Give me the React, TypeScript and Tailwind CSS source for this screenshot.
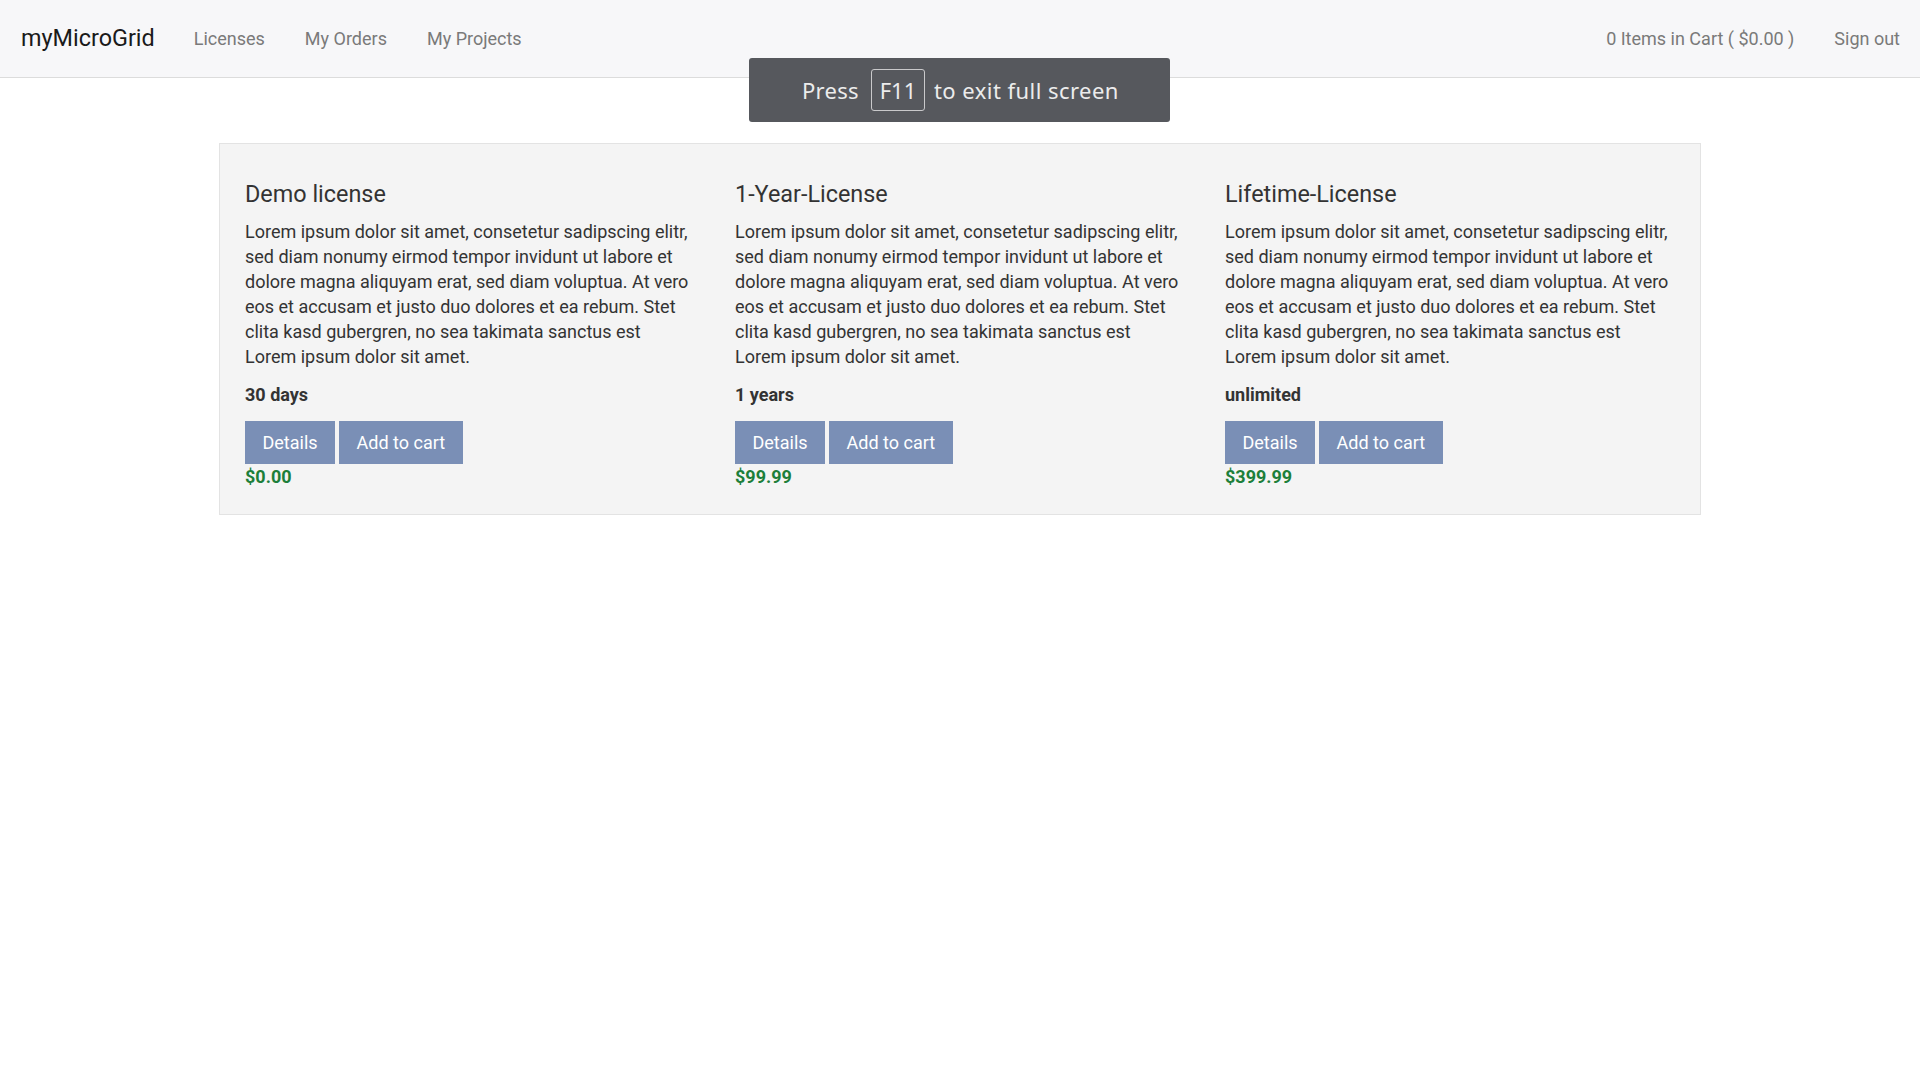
import React from "react";

const lorem =
  "Lorem ipsum dolor sit amet, consetetur sadipscing elitr, sed diam nonumy eirmod tempor invidunt ut labore et dolore magna aliquyam erat, sed diam voluptua. At vero eos et accusam et justo duo dolores et ea rebum. Stet clita kasd gubergren, no sea takimata sanctus est Lorem ipsum dolor sit amet.";

const licenses = [
  { title: "Demo license", duration: "30 days", price: "$0.00" },
  { title: "1-Year-License", duration: "1 years", price: "$99.99" },
  { title: "Lifetime-License", duration: "unlimited", price: "$399.99" },
];

export default function App() {
  return (
    <div className="relative min-h-[1080px] bg-white font-['Roboto',sans-serif] text-[18px] leading-[25px] text-[#333]">
      <nav className="flex h-[78px] items-center justify-between border-b border-[#dcdcdc] bg-[#f7f7f9]">
        <div className="flex items-center">
          <span className="pl-[21px] pr-[19px] text-[23.4px] text-[#1a1a1a]">myMicroGrid</span>
          <a className="px-[20px] text-[#7a7a7a]">Licenses</a>
          <a className="px-[20px] text-[#7a7a7a]">My Orders</a>
          <a className="px-[20px] text-[#7a7a7a]">My Projects</a>
        </div>
        <div className="flex items-center">
          <a className="px-[20px] text-[#7a7a7a]">0 Items in Cart ( $0.00 )</a>
          <a className="px-[20px] text-[#7a7a7a]">Sign out</a>
        </div>
      </nav>

      <div className="mx-auto mt-[65px] w-[1482px] border border-[#e3e3e3] bg-[#f4f4f4] px-[5px] pt-[38px] pb-[25px]">
        <div className="grid grid-cols-3">
          {licenses.map((l) => (
            <div key={l.title} className="pl-[20px] pr-[20px]">
              <h4 className="mb-[12px] text-[23.4px] leading-[25px] text-[#333]">{l.title}</h4>
              <p className="mb-[13px]">{lorem}</p>
              <p className="mb-[14px] font-bold">{l.duration}</p>
              <div className="flex gap-[4px]">
                <button className="h-[43px] bg-[#7a8fb6] px-[17.5px] text-white">Details</button>
                <button className="h-[43px] bg-[#7a8fb6] px-[17.5px] text-white">Add to cart</button>
              </div>
              <div className="font-bold text-[#1d7f3a]">{l.price}</div>
            </div>
          ))}
        </div>
      </div>

      <div className="absolute left-[749px] top-[58px] flex h-[64px] w-[421px] items-center rounded-[3px] bg-[#56585d] pl-[53px] font-['Noto_Sans',sans-serif] text-[22px] text-[#ececec]">
        <span className="tracking-[0.3px]">Press</span>
        <span className="ml-[12px] mr-[9px] flex h-[42px] w-[54px] items-center justify-center rounded-[3px] border border-[#c9c9cb]">
          F11
        </span>
        <span className="tracking-[0.45px]">to exit full screen</span>
      </div>
    </div>
  );
}
